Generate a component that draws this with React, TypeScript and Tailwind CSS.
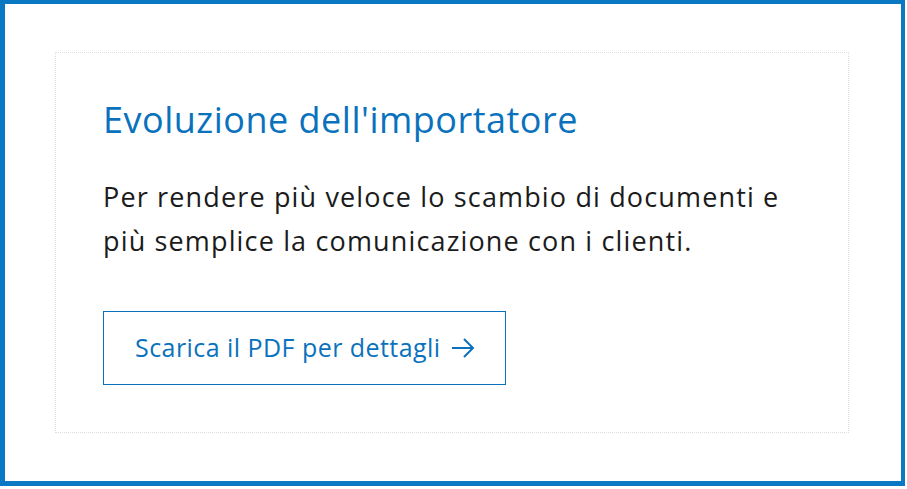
import React from 'react';

export default function App() {
  return (
    <div className="w-[907px] h-[489px] bg-white">
      <div
        className="w-[905px] h-[486px] bg-white border-[#0b78c4] border-t-[4px] border-l-[5px] border-r-[4px] border-b-[5px] pl-[50px] pt-[48px]"
        style={{ fontFamily: '"Open Sans", "Liberation Sans", sans-serif' }}
      >
        <div className="w-[794px] h-[381px] border border-dotted border-[#dcdce4] pl-[47px] pt-[45px]">
          <h2 className="text-[36px] leading-[44px] tracking-[0.5px] text-[#0a72bd] font-normal">
            Evoluzione dell'importatore
          </h2>
          <p className="mt-[33px] text-[27px] leading-[44px] tracking-[1.15px] text-[#1b1b1b] w-[700px]">
            Per rendere più veloce lo scambio di documenti e più semplice la comunicazione con i clienti.
          </p>
          <a
            href="#"
            className="mt-[48px] flex items-center gap-[10px] w-[403px] h-[74px] border border-[#0a72bd] pl-[31px] text-[25px] tracking-[0.45px] text-[#0a72bd]"
          >
            <span>Scarica il PDF per dettagli</span>
            <svg width="24" height="20" viewBox="0 0 24 20" fill="none" stroke="currentColor" strokeWidth="2">
              <path d="M1 10h21M13 1l9 9-9 9" />
            </svg>
          </a>
        </div>
      </div>
    </div>
  );
}
